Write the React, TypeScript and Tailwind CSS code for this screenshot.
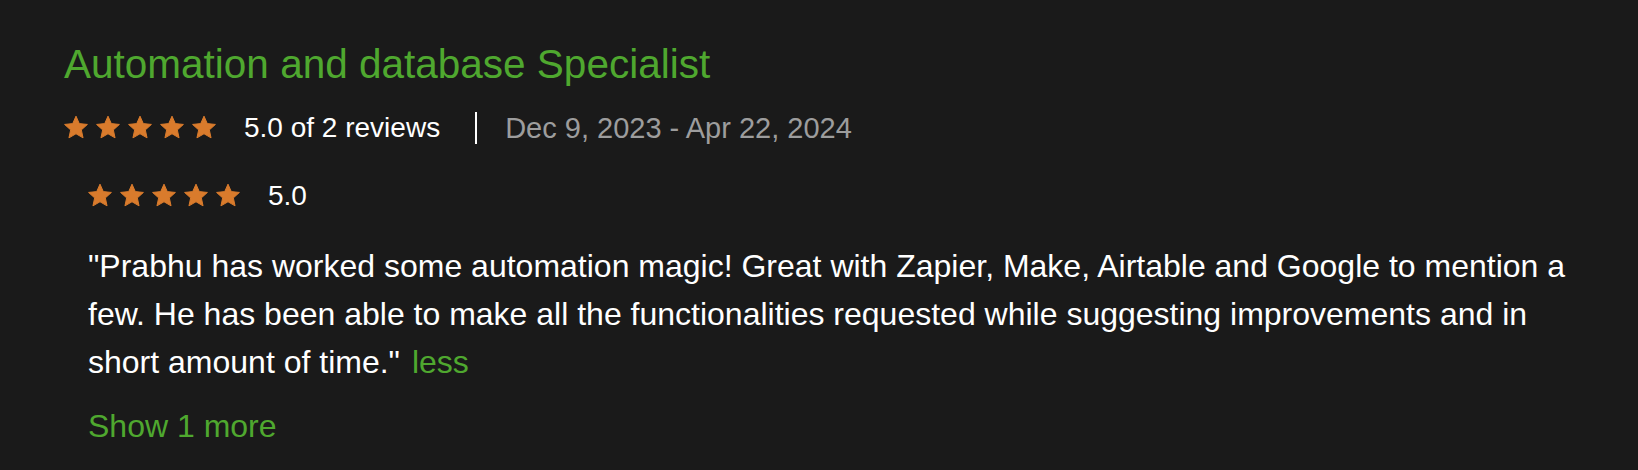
import React from "react";

const Star = () => (
  <svg
    viewBox="0 0 24 24"
    className="w-6 h-6 shrink-0 overflow-visible -mt-0.5"
    aria-hidden="true"
  >
    <path
      d="M12 1.15 L15.29 8.62 L23.41 9.44 L17.33 14.88 L19.05 22.86 L12 18.75 L4.95 22.86 L6.67 14.88 L0.59 9.44 L8.71 8.62 Z"
      fill="#d97b2c"
      stroke="#d97b2c"
      strokeWidth={1}
      strokeLinejoin="round"
    />
  </svg>
);

const Stars = () => (
  <div className="flex items-center gap-2">
    {[0, 1, 2, 3, 4].map((i) => (
      <Star key={i} />
    ))}
  </div>
);

const review = {
  title: "Automation and database Specialist",
  rating: "5.0",
  reviews: 2,
  period: "Dec 9, 2023 - Apr 22, 2024",
  feedback:
    '"Prabhu has worked some automation magic! Great with Zapier, Make, Airtable and Google to mention a few. He has been able to make all the functionalities requested while suggesting improvements and in short amount of time."',
};

export default function App() {
  return (
    <div
      className="min-h-screen w-full bg-[#1a1a1a] pl-16 pr-10 pt-10 text-white"
      style={{ fontFamily: '"Liberation Sans", Arial, sans-serif' }}
    >
      {/* Job title */}
      <h2 className="text-[40.5px] leading-[48px] text-[#4fa82f] font-normal">
        {review.title}
      </h2>

      {/* Overall rating + dates */}
      <div className="mt-5 flex h-10 items-center">
        <Stars />
        <span className="ml-7 text-[28px] leading-10">
          {review.rating} of {review.reviews} reviews
        </span>
        <span className="ml-[35px] h-8 w-[2px] bg-white" />
        <span className="ml-7 text-[29px] leading-10 text-[#9d9d9d]">
          {review.period}
        </span>
      </div>

      {/* Single review */}
      <div className="pl-6">
        <div className="mt-7 flex h-10 items-center">
          <Stars />
          <span className="ml-7 text-[28px] leading-10">{review.rating}</span>
        </div>

        <p className="mt-[26px] text-[32px] leading-[48px]">
          {review.feedback}
          <span className="ml-3 text-[#4fa82f] cursor-pointer">less</span>
        </p>

        <button className="mt-4 block text-[32px] leading-[48px] text-[#4fa82f]">
          Show 1 more
        </button>
      </div>
    </div>
  );
}
